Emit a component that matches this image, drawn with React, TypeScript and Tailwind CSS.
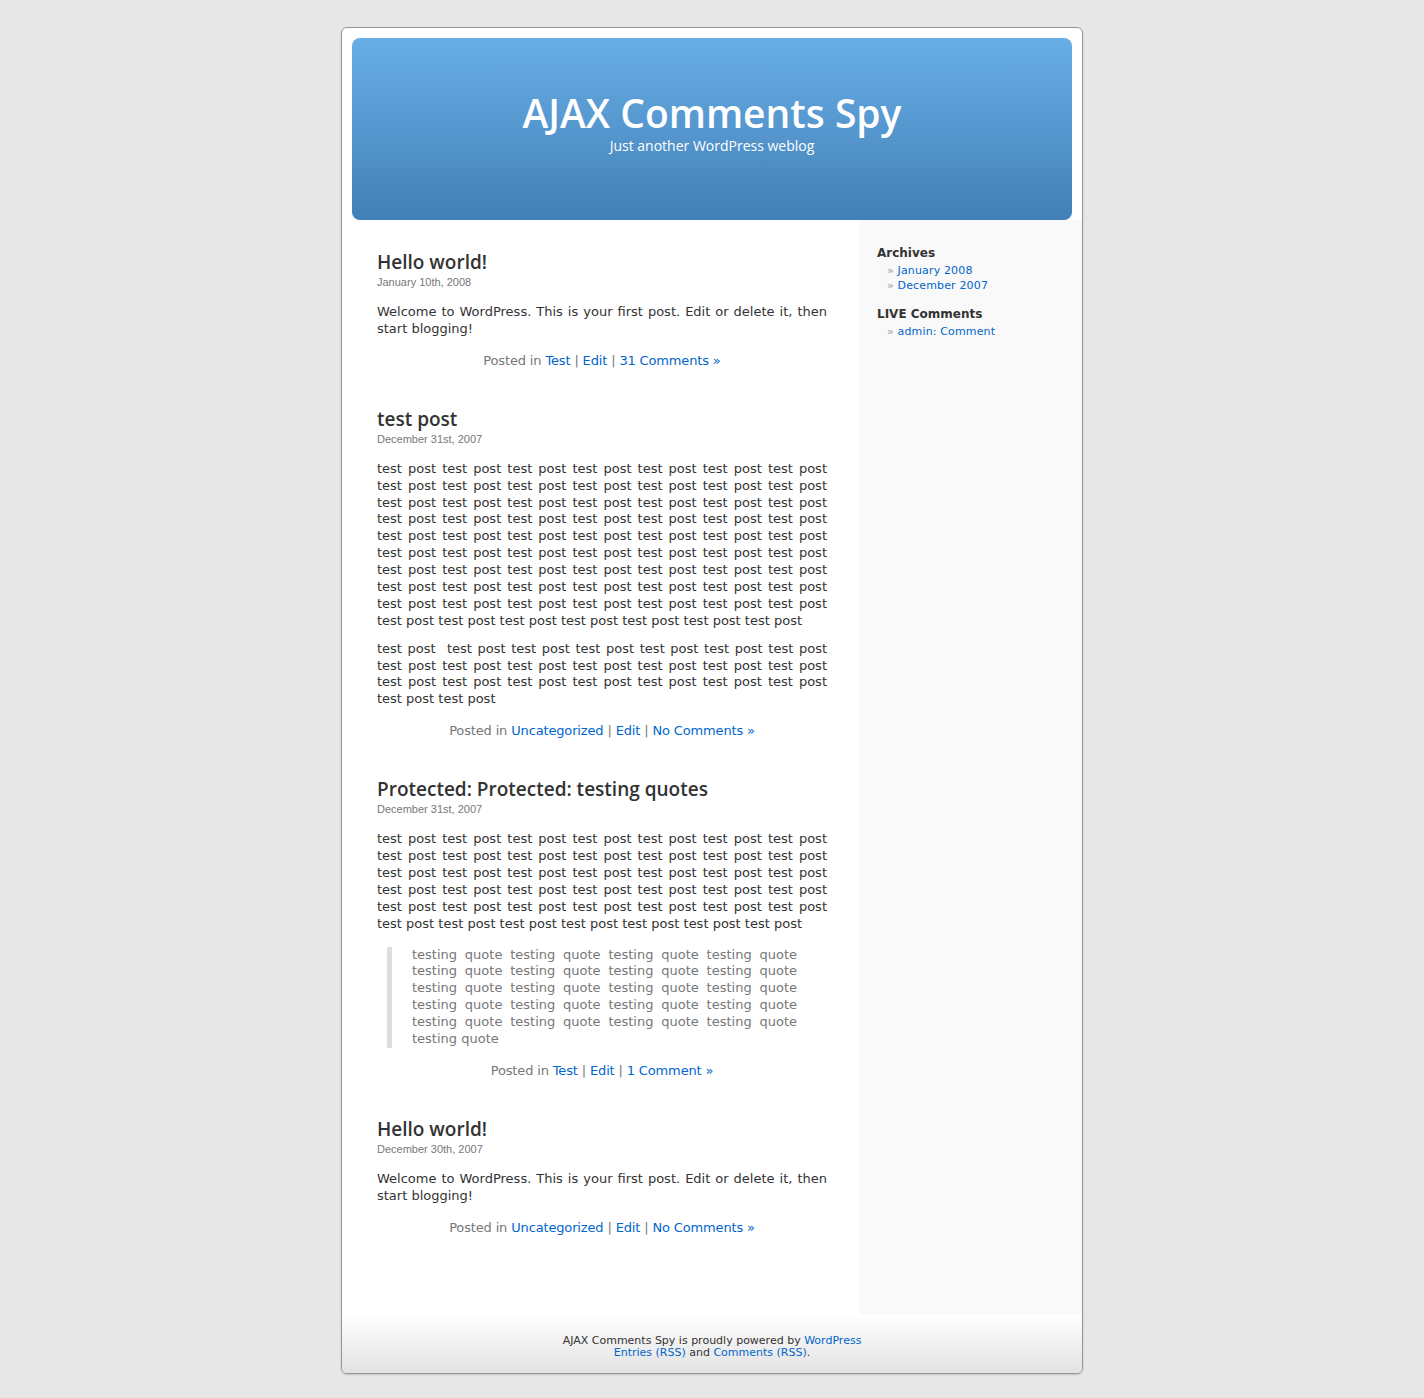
const tp = (n: number) => Array(n).fill("test post").join(" ");
const tq = (n: number) => Array(n).fill("testing quote").join(" ");

function Meta({ cat, comments }: { cat: string; comments: string }) {
  return (
    <p className="mt-[14px] text-center text-[13px] leading-[17px] text-[#777] tracking-[-0.15px]">
      Posted in <a className="text-[#06c]">{cat}</a> | <a className="text-[#06c]">Edit</a> |{" "}
      <a className="text-[#06c]">{comments} »</a>
    </p>
  );
}

function Post({
  title,
  date,
  first,
  children,
}: {
  title: string;
  date: string;
  first?: boolean;
  children: React.ReactNode;
}) {
  return (
    <div className={first ? "" : "mt-[38px]"}>
      <h2 className="font-['Open_Sans',sans-serif] text-[19px] leading-[24px] font-semibold text-[#333]">
        {title}
      </h2>
      <small className="mt-[1px] block font-['Liberation_Sans',Arial,sans-serif] text-[11px] leading-[14px] text-[#777]">
        {date}
      </small>
      <div className="mt-[15px] text-[13px] leading-[1.3] text-[#333] text-justify">{children}</div>
    </div>
  );
}

export default function App() {
  return (
    <div className="min-h-[1398px] bg-[#e7e7e7] pt-[27px] font-['DejaVu_Sans',Verdana,sans-serif]">
      <div className="mx-auto w-[742px] rounded-[6px] border border-[#959596] bg-white shadow-[0_1px_2px_rgba(0,0,0,0.15)]">
        <div className="mx-[10px] mt-[10px] flex h-[182px] flex-col items-center rounded-[8px] bg-gradient-to-b from-[#69aee7] to-[#4180b6] pt-[55px] text-white">
          <h1 className="font-['Open_Sans',sans-serif] text-[39px] leading-[40px] font-semibold">
            AJAX Comments Spy
          </h1>
          <div className="mt-[4px] font-['Open_Sans',sans-serif] text-[14px] leading-[18px]">
            Just another WordPress weblog
          </div>
        </div>

        <div className="flex">
          <div className="w-[517px] pl-[35px] pr-[32px] pt-[30px] pb-[78px]">
            <Post title="Hello world!" date="January 10th, 2008" first>
              <p>Welcome to WordPress. This is your first post. Edit or delete it, then start blogging!</p>
            </Post>
            <Meta cat="Test" comments="31 Comments" />

            <Post title="test post" date="December 31st, 2007">
              <p>{tp(70)}</p>
              <p className="mt-[11px]">{"test post\u00a0 " + tp(22)}</p>
            </Post>
            <Meta cat="Uncategorized" comments="No Comments" />

            <Post title="Protected: Protected: testing quotes" date="December 31st, 2007">
              <p>{tp(42)}</p>
              <blockquote className="mt-[14px] ml-[10px] mr-[30px] border-l-[5px] border-[#ddd] pl-[20px] text-[#777]">
                {tq(21)}
              </blockquote>
            </Post>
            <Meta cat="Test" comments="1 Comment" />

            <Post title="Hello world!" date="December 30th, 2007">
              <p>Welcome to WordPress. This is your first post. Edit or delete it, then start blogging!</p>
            </Post>
            <Meta cat="Uncategorized" comments="No Comments" />
          </div>

          <div className="w-[223px] bg-[#f9f9f9] pl-[18px] pt-[26px] text-[#333]">
            <h2 className="text-[12px] leading-[15px] font-bold">Archives</h2>
            <ul className="mt-[2px] pl-[10px] text-[11px] leading-[15px] tracking-[0.15px]">
              <li>
                <span className="text-[#999]">»</span> <a className="text-[#06c]">January 2008</a>
              </li>
              <li>
                <span className="text-[#999]">»</span> <a className="text-[#06c]">December 2007</a>
              </li>
            </ul>
            <h2 className="mt-[14px] text-[12px] leading-[15px] font-bold">LIVE Comments</h2>
            <ul className="mt-[2px] pl-[10px] text-[11px] leading-[15px] tracking-[0.15px]">
              <li>
                <span className="text-[#999]">»</span> <a className="text-[#06c]">admin: Comment</a>
              </li>
            </ul>
          </div>
        </div>

        <div className="h-[59px] rounded-b-[6px] bg-gradient-to-b from-white to-[#e2e2e2] pt-[21px] text-center text-[11px] leading-[12px] text-[#333]">
          <p>
            AJAX Comments Spy is proudly powered by <a className="text-[#06c]">WordPress</a>
          </p>
          <p>
            <a className="text-[#06c]">Entries (RSS)</a> and <a className="text-[#06c]">Comments (RSS)</a>.
          </p>
        </div>
      </div>
    </div>
  );
}
